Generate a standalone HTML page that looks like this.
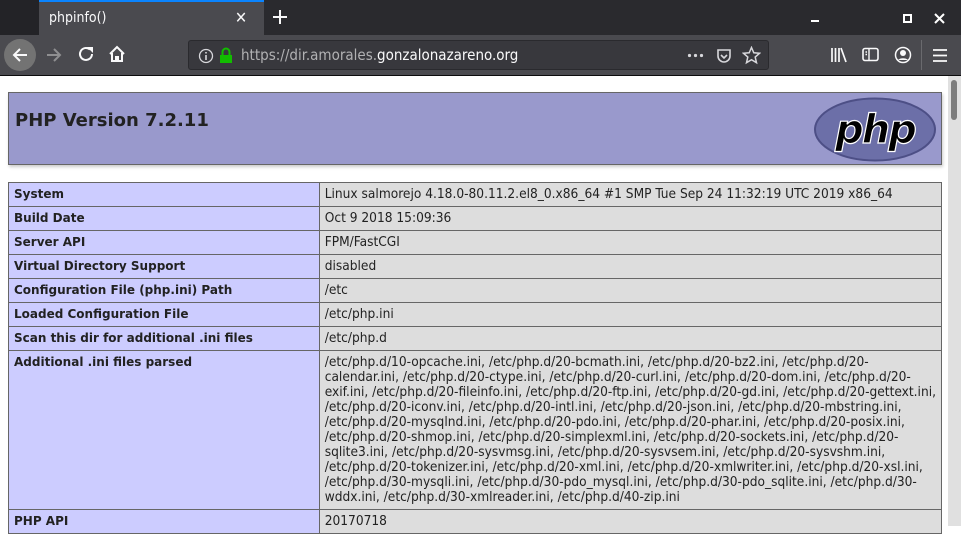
<!DOCTYPE html>
<html><head><meta charset="utf-8"><style>
*{box-sizing:border-box;margin:0;padding:0}
body{width:961px;height:526px;overflow:hidden;background:#fff;font-family:"DejaVu Sans",sans-serif;position:relative}
#tabs{position:absolute;left:0;top:0;width:961px;height:35px;background:#0c0c0d}
#tabs .l{position:absolute;left:0;top:0;width:39px;height:35px;background:#232327}
#tab{position:absolute;left:39px;top:0;width:225px;height:35px;background:#4a4a4f;border-top:2px solid #0a84ff;color:#f9f9fa;font-size:14px;padding:8px 0 0 10px;font-family:"DejaVu Sans Condensed","DejaVu Sans",sans-serif}
#tabs .r{position:absolute;left:264px;top:0;right:0;height:35px;background:#2a2a2e}
#tb{position:absolute;left:0;top:35px;width:961px;height:41px;background:#4a4a4f;border-bottom:1px solid #0c0c0d}
#url{position:absolute;left:188px;top:5px;width:581px;height:30px;background:#38383d;border:1px solid #2a2a2e;border-radius:3px;color:#b1b1b3;font-size:15px;padding:5px 0 0 52px;font-family:"DejaVu Sans Condensed","DejaVu Sans",sans-serif}
#url b{font-weight:normal;color:#f9f9fa}
#page{position:absolute;left:0;top:76px;width:948px;height:450px;background:#fff}
#sb{position:absolute;left:948px;top:76px;width:13px;height:450px;background:#e0e0e0}
#sb div{position:absolute;left:3px;top:4px;width:6px;height:40px;background:#7d7d7d;border-radius:3px}
#hd{position:absolute;left:8px;top:16px;width:934px;height:73px;background:#9999cc;border:1px solid #666;box-shadow:1px 2px 3px #ccc}
#hd h1{position:absolute;left:6px;top:17px;font-size:18px;font-weight:bold;color:#222}
table{position:absolute;left:8px;top:106px;width:934px;border-collapse:collapse;font-size:12px;color:#222}
td{border:1px solid #666;padding:4px 5px 4px 5px;line-height:15px;vertical-align:top;white-space:nowrap}
td.e{background:#ccf;font-weight:bold;width:311px}
td.v{background:#ddd;font-family:"DejaVu Sans Condensed","DejaVu Sans",sans-serif;font-size:13.6px}
.ic{position:absolute}
</style></head><body>
<div id="tabs"><div class="l"></div><div id="tab">phpinfo()<span style="position:absolute;left:196px;top:6px;font-size:16px">✕</span></div><div class="r">
<svg class="ic" style="left:9px;top:10px" width="14" height="14"><path d="M7 0V14M0 7H14" stroke="#f9f9fa" stroke-width="2"/></svg>
<svg class="ic" style="left:545px;top:12px" width="14" height="12"><path d="M2 9H10" stroke="#fff" stroke-width="2"/></svg>
<svg class="ic" style="left:639px;top:14px" width="10" height="10"><rect x="1" y="1" width="7" height="7" fill="none" stroke="#fff" stroke-width="2"/></svg>
<svg class="ic" style="left:670px;top:13px" width="12" height="12"><path d="M1 1L10 10M10 1L1 10" stroke="#fff" stroke-width="2"/></svg>
</div></div>
<div id="tb">
<div style="position:absolute;left:4px;top:4px;width:32px;height:32px;border-radius:50%;background:#737373"></div>
<svg class="ic" style="left:10px;top:10px" width="20" height="20"><path d="M17 10H4M10 4L4 10L10 16" fill="none" stroke="#f9f9fa" stroke-width="2"/></svg>
<svg class="ic" style="left:44px;top:10px" width="20" height="20"><path d="M3 10H16M10 4L16 10L10 16" fill="none" stroke="#8f8f91" stroke-width="2"/></svg>
<svg class="ic" style="left:78px;top:10px" width="18" height="18"><path d="M14 9A6 6 0 1 1 12 4.5" fill="none" stroke="#f9f9fa" stroke-width="2"/><path d="M9 2H15V8Z" fill="#f9f9fa"/></svg>
<svg class="ic" style="left:108px;top:10px" width="18" height="18"><path d="M2 9L9 2L16 9M4 8V16H8V12H10V16H14V8" fill="none" stroke="#f9f9fa" stroke-width="2"/></svg>
<div id="url">https://dir.amorales.<b>gonzalonazareno.org</b>
<svg class="ic" style="left:9px;top:7px" width="16" height="16"><circle cx="8" cy="8" r="6.5" fill="none" stroke="#d7d7db" stroke-width="1.3"/><path d="M8 7V12M8 4V5.5" stroke="#d7d7db" stroke-width="1.6"/></svg>
<svg class="ic" style="left:30px;top:6px" width="14" height="17"><path d="M3.5 8V5A3.5 3.5 0 0 1 10.5 5V8" fill="none" stroke="#12bc00" stroke-width="2"/><rect x="1" y="8" width="12" height="8" fill="#12bc00"/></svg>
<svg class="ic" style="left:498px;top:12px" width="18" height="5"><circle cx="2.5" cy="2.5" r="1.6" fill="#d7d7db"/><circle cx="8.5" cy="2.5" r="1.6" fill="#d7d7db"/><circle cx="14.5" cy="2.5" r="1.6" fill="#d7d7db"/></svg>
<svg class="ic" style="left:526px;top:6px" width="18" height="18"><path d="M3 3H15V9A6 6 0 0 1 3 9Z" fill="none" stroke="#d7d7db" stroke-width="1.6"/><path d="M6 8L9 11L12 8" fill="none" stroke="#d7d7db" stroke-width="1.6"/></svg>
<svg class="ic" style="left:553px;top:5px" width="19" height="19"><path d="M9.5 1.5L11.8 6.8L17.5 7.3L13.2 11L14.5 16.7L9.5 13.7L4.5 16.7L5.8 11L1.5 7.3L7.2 6.8Z" fill="none" stroke="#d7d7db" stroke-width="1.5"/></svg>
</div>
<svg class="ic" style="left:830px;top:12px" width="18" height="16"><path d="M2 1V15M5.5 1V15M9 1V15M11 1L16 15" stroke="#f9f9fa" stroke-width="1.7"/></svg>
<svg class="ic" style="left:862px;top:12px" width="18" height="16"><rect x="1" y="1.5" width="15" height="12" rx="2" fill="none" stroke="#f9f9fa" stroke-width="1.6"/><path d="M7 2V13M3.5 5H5M3.5 7.5H5" stroke="#f9f9fa" stroke-width="1.4"/></svg>
<svg class="ic" style="left:894px;top:11px" width="18" height="18"><circle cx="9" cy="9" r="7.5" fill="none" stroke="#f9f9fa" stroke-width="1.5"/><circle cx="9" cy="7" r="3" fill="#f9f9fa"/><path d="M4 14A6 4 0 0 1 14 14" fill="#f9f9fa"/></svg>
<div style="position:absolute;left:921px;top:5px;width:1px;height:30px;background:#6a6a6e"></div>
<svg class="ic" style="left:932px;top:13px" width="16" height="15"><path d="M1 2H15M1 7.5H15M1 13H15" stroke="#f9f9fa" stroke-width="1.8"/></svg>
</div>
<div id="page">
<div id="hd"><h1>PHP Version 7.2.11</h1>
<svg class="ic" style="left:804px;top:4px" width="124" height="65"><ellipse cx="62" cy="32.5" rx="60" ry="31" fill="#6c6fa8" stroke="#4d4f86" stroke-width="2"/><text x="62" y="46" text-anchor="middle" font-family="DejaVu Sans" font-style="italic" font-weight="bold" font-size="40" fill="#000" stroke="#fff" stroke-width="1.2" letter-spacing="-2">php</text></svg>
</div>
<table>
<tr><td class="e">System</td><td class="v">Linux salmorejo 4.18.0-80.11.2.el8_0.x86_64 #1 SMP Tue Sep 24 11:32:19 UTC 2019 x86_64</td></tr>
<tr><td class="e">Build Date</td><td class="v">Oct 9 2018 15:09:36</td></tr>
<tr><td class="e">Server API</td><td class="v">FPM/FastCGI</td></tr>
<tr><td class="e">Virtual Directory Support</td><td class="v">disabled</td></tr>
<tr><td class="e">Configuration File (php.ini) Path</td><td class="v">/etc</td></tr>
<tr><td class="e">Loaded Configuration File</td><td class="v">/etc/php.ini</td></tr>
<tr><td class="e">Scan this dir for additional .ini files</td><td class="v">/etc/php.d</td></tr>
<tr><td class="e">Additional .ini files parsed</td><td class="v">/etc/php.d/10-opcache.ini, /etc/php.d/20-bcmath.ini, /etc/php.d/20-bz2.ini, /etc/php.d/20-<br>calendar.ini, /etc/php.d/20-ctype.ini, /etc/php.d/20-curl.ini, /etc/php.d/20-dom.ini, /etc/php.d/20-<br>exif.ini, /etc/php.d/20-fileinfo.ini, /etc/php.d/20-ftp.ini, /etc/php.d/20-gd.ini, /etc/php.d/20-gettext.ini,<br>/etc/php.d/20-iconv.ini, /etc/php.d/20-intl.ini, /etc/php.d/20-json.ini, /etc/php.d/20-mbstring.ini,<br>/etc/php.d/20-mysqlnd.ini, /etc/php.d/20-pdo.ini, /etc/php.d/20-phar.ini, /etc/php.d/20-posix.ini,<br>/etc/php.d/20-shmop.ini, /etc/php.d/20-simplexml.ini, /etc/php.d/20-sockets.ini, /etc/php.d/20-<br>sqlite3.ini, /etc/php.d/20-sysvmsg.ini, /etc/php.d/20-sysvsem.ini, /etc/php.d/20-sysvshm.ini,<br>/etc/php.d/20-tokenizer.ini, /etc/php.d/20-xml.ini, /etc/php.d/20-xmlwriter.ini, /etc/php.d/20-xsl.ini,<br>/etc/php.d/30-mysqli.ini, /etc/php.d/30-pdo_mysql.ini, /etc/php.d/30-pdo_sqlite.ini, /etc/php.d/30-<br>wddx.ini, /etc/php.d/30-xmlreader.ini, /etc/php.d/40-zip.ini</td></tr>
<tr><td class="e">PHP API</td><td class="v">20170718</td></tr>
</table>
</div>
<div id="sb"><div></div></div>
</body></html>
